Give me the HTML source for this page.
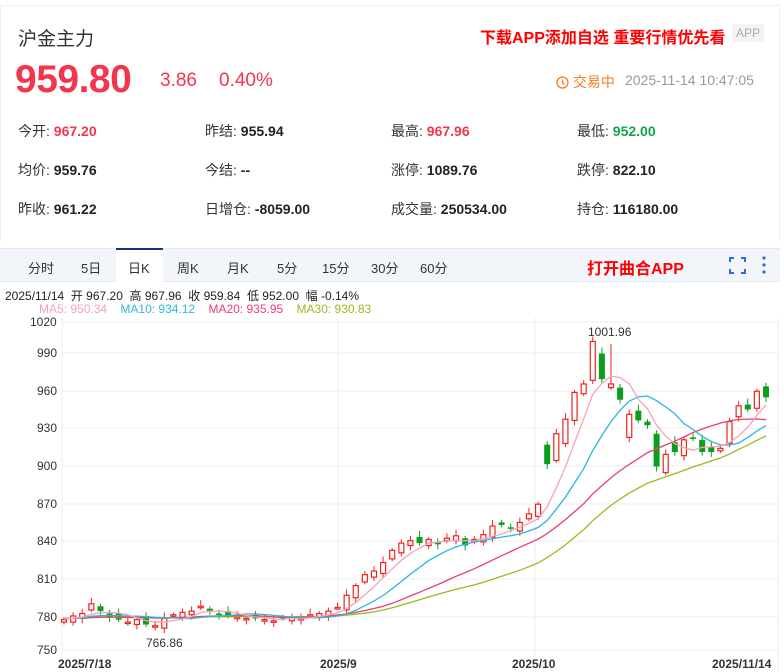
<!DOCTYPE html>
<html><head><meta charset="utf-8"><style>
*{margin:0;padding:0;box-sizing:border-box}
body{width:784px;height:672px;background:#fff;font-family:"Liberation Sans","Noto Sans CJK SC",sans-serif;position:relative;overflow:hidden;color:#222}
.card{position:absolute;left:0;top:5px;width:780px;height:236px;border:1px solid #eee;border-bottom:none}
.a{position:absolute;white-space:nowrap}
.r{color:#f4364c}.g{color:#0ea84a}
.st{font-size:14px;color:#333}.st b{font-weight:bold;color:#222}
.st b.r{color:#f4364c}.st b.g{color:#0ea84a}
.tabs{position:absolute;left:0;top:248px;width:780px;height:34px;background:#f2f6fb;border-top:1px solid #e3e9f2;border-bottom:1px solid #e3e9f2}
.tab{position:absolute;top:9px;font-size:13px;color:#333}
</style></head><body>
<div class="card"></div>
<div class="a" style="left:18px;top:24px;font-size:19px;color:#333">沪金主力</div>
<div class="a" style="left:480px;top:24px;font-size:16px;font-weight:bold;color:#f00">下载APP添加自选 重要行情优先看</div>
<div class="a" style="left:732px;top:24px;width:32px;height:18px;background:#f3f3f3;color:#aaa;font-size:12px;text-align:center;line-height:18px">APP</div>
<div class="a r" style="left:15px;top:58px;font-size:39px;font-weight:bold;letter-spacing:-0.5px">959.80</div>
<div class="a r" style="left:160px;top:70px;font-size:19px">3.86</div>
<div class="a r" style="left:219px;top:70px;font-size:19px">0.40%</div>
<div class="a" style="left:556px;top:72px;font-size:14px;color:#f77b1e"><svg width="13" height="13" viewBox="0 0 13 13" style="vertical-align:-2px"><circle cx="6.5" cy="6.5" r="5.5" fill="none" stroke="#f77b1e" stroke-width="1.3"/><path d="M6.5 3.5V7l2 1.5" fill="none" stroke="#f77b1e" stroke-width="1.3"/></svg> 交易中</div>
<div class="a" style="left:625px;top:72px;font-size:14px;color:#999">2025-11-14 10:47:05</div>

<div class="a st" style="left:18px;top:121px">今开: <b class="r">967.20</b></div>
<div class="a st" style="left:205px;top:121px">昨结: <b>955.94</b></div>
<div class="a st" style="left:391px;top:121px">最高: <b class="r">967.96</b></div>
<div class="a st" style="left:577px;top:121px">最低: <b class="g">952.00</b></div>
<div class="a st" style="left:18px;top:160px">均价: <b>959.76</b></div>
<div class="a st" style="left:205px;top:160px">今结: <b>--</b></div>
<div class="a st" style="left:391px;top:160px">涨停: <b>1089.76</b></div>
<div class="a st" style="left:577px;top:160px">跌停: <b>822.10</b></div>
<div class="a st" style="left:18px;top:199px">昨收: <b>961.22</b></div>
<div class="a st" style="left:205px;top:199px">日增仓: <b>-8059.00</b></div>
<div class="a st" style="left:391px;top:199px">成交量: <b>250534.00</b></div>
<div class="a st" style="left:577px;top:199px">持仓: <b>116180.00</b></div>

<div class="tabs">
<div class="a" style="left:116px;top:-1px;width:47px;height:35px;background:#fff;border-top:2px solid #1b2f7a"></div>
<span class="tab a" style="left:28px">分时</span><span class="tab a" style="left:81px">5日</span>
<span class="tab a" style="left:128px">日K</span><span class="tab a" style="left:177px">周K</span>
<span class="tab a" style="left:227px">月K</span><span class="tab a" style="left:277px">5分</span>
<span class="tab a" style="left:322px">15分</span><span class="tab a" style="left:371px">30分</span>
<span class="tab a" style="left:420px">60分</span>
<span class="a" style="left:587px;top:6px;font-size:16px;font-weight:bold;color:#f00">打开曲合APP</span>
<svg class="a" style="left:729px;top:8px" width="17" height="17" viewBox="0 0 17 17" fill="none" stroke="#2a6fd6" stroke-width="2"><path d="M1 5V1h4M12 1h4v4M16 12v4h-4M5 16H1v-4"/></svg>
<svg class="a" style="left:761px;top:6px" width="6" height="20"><circle cx="3" cy="3" r="1.6" fill="#2a6fd6"/><circle cx="3" cy="10" r="1.6" fill="#2a6fd6"/><circle cx="3" cy="17" r="1.6" fill="#2a6fd6"/></svg>
</div>
<div class="a" style="left:5px;top:287px;font-size:12px;color:#222">2025/11/14 &nbsp;开 967.20 &nbsp;高 967.96 &nbsp;收 959.84 &nbsp;低 952.00 &nbsp;幅 -0.14%</div>
<div class="a" style="left:39px;top:302px;font-size:12px"><span style="color:#f7a1b8">MA5: 950.34</span>&nbsp;&nbsp;&nbsp; <span style="color:#2ab8dc">MA10: 934.12</span>&nbsp;&nbsp;&nbsp; <span style="color:#ea3e74">MA20: 935.95</span>&nbsp;&nbsp;&nbsp; <span style="color:#99bb22">MA30: 930.83</span></div>

<svg id="ch" class="a" style="left:0;top:312px" width="784" height="360" viewBox="0 312 784 360" font-family="Liberation Sans,sans-serif" font-size="12" fill="#333">
<g stroke="#ececec" stroke-width="1">
<line x1="62" y1="322" x2="778" y2="322"/><line x1="62" y1="353" x2="778" y2="353"/><line x1="62" y1="391" x2="778" y2="391"/><line x1="62" y1="428" x2="778" y2="428"/><line x1="62" y1="466" x2="778" y2="466"/><line x1="62" y1="504" x2="778" y2="504"/><line x1="62" y1="541" x2="778" y2="541"/><line x1="62" y1="579" x2="778" y2="579"/><line x1="62" y1="617" x2="778" y2="617"/><line x1="62" y1="650" x2="778" y2="650"/>
<line x1="338" y1="318" x2="338" y2="660"/><line x1="535" y1="318" x2="535" y2="660"/><line x1="778" y1="318" x2="778" y2="672"/><line x1="62" y1="318" x2="62" y2="660"/>
</g>
<text x="30" y="326">1020</text><text x="37" y="357">990</text><text x="37" y="395">960</text><text x="37" y="432">930</text><text x="37" y="470">900</text><text x="37" y="508">870</text><text x="37" y="545">840</text><text x="37" y="583">810</text><text x="37" y="621">780</text><text x="37" y="654">750</text>
<text x="58" y="668" font-weight="bold">2025/7/18</text><text x="320" y="668" font-weight="bold">2025/9</text><text x="512" y="668" font-weight="bold">2025/10</text><text x="712" y="668" font-weight="bold">2025/11/14</text>
<text x="588" y="336">1001.96</text><text x="146" y="647">766.86</text>
<g id="g"></g>
</svg>
<script>
var Y=function(p){return 322+(1020-p)*1.2148};
var cl=[775,778,780,788,782,777,775,773,775,771,770,776,779,781,782,786,782,779,778,777,776,776,775,774,776,777,776,779,780,782,785,795,803,812,815,822,832,838,840,838,841,837,842,844,836,841,845,852,853,850,855,862,870,903];
var tail=[[906,928],[920,940],[939,962],[961,969],[972,1004],[994,973],[966,969],[966,956],[925,944],[947,939],[938,935],[928,901],[896,911],[921,913],[910,923],[925,924],[923,913],[917,913],[914,916],[920,938],[942,951],[952,948],[949,963],[967,958]];
var C=[];for(var i=0;i<cl.length;i++){var o=i?cl[i-1]+(i%3==0?3:-2):773;C.push([o,cl[i]]);}
C[C.length-1]=[919,903];C=C.concat(tail);
var n=C.length,step=(766-64)/(n-1),s='';
var closes=C.map(function(c){return c[1]});
for(i=0;i<n;i++){var x=64+i*step,o=C[i][0],c=C[i][1],up=c>=o,col=up?'#f0231c':'#0a9e1c';
var hi=Math.max(o,c)+2+(i%4),lo=Math.min(o,c)-2-(i%3);
if(i==n-18){hi=1001.96}
var y1=Y(Math.max(o,c)),y2=Y(Math.min(o,c));if(y2-y1<1.5)y2=y1+1.5;
s+='<line x1="'+x+'" x2="'+x+'" y1="'+Y(hi)+'" y2="'+Y(lo)+'" stroke="'+col+'"/>';
s+=up?'<rect x="'+(x-2.5)+'" y="'+y1+'" width="5" height="'+(y2-y1)+'" fill="#fff" stroke="'+col+'" stroke-width="1.2"/>':'<rect x="'+(x-3)+'" y="'+y1+'" width="6" height="'+(y2-y1)+'" fill="'+col+'"/>';}
function ma(k,col){var p='';for(var i=0;i<n;i++){var sum=0;for(var j=i-k+1;j<=i;j++)sum+=j<0?776:closes[j];p+=(i?'L':'M')+(64+i*step).toFixed(1)+' '+Y(sum/k).toFixed(1);}return '<path d="'+p+'" fill="none" stroke="'+col+'" stroke-width="1.3"/>';}
s+=ma(30,'#99bb22')+ma(20,'#ea3e74')+ma(10,'#2ab8dc')+ma(5,'#f7a1b8');
document.getElementById('g').innerHTML=s;
</script>
</body></html>
